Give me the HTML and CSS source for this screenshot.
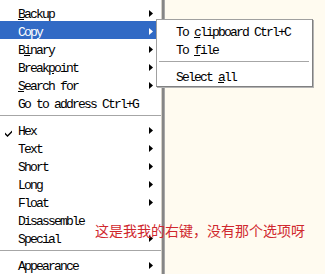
FILE: index.html
```html
<!DOCTYPE html>
<html lang="en">
<head>
    <meta charset="UTF-8">
    <title>Context menu</title>
    <link rel="stylesheet" href="styles.css">
</head>
<body>
    <div class="menu">
        <div class="item"><span><u>B</u>ackup</span><svg class="arrow" width="4" height="7"><polygon points="0,0 4,3.5 0,7"/></svg></div>
        <div class="item active"><span>Copy</span><svg class="arrow" width="4" height="7"><polygon points="0,0 4,3.5 0,7"/></svg></div>
        <div class="item"><span>B<u>i</u>nary</span><svg class="arrow" width="4" height="7"><polygon points="0,0 4,3.5 0,7"/></svg></div>
        <div class="item"><span>Break<u>p</u>oint</span><svg class="arrow" width="4" height="7"><polygon points="0,0 4,3.5 0,7"/></svg></div>
        <div class="item"><span><u>S</u>earch for</span><svg class="arrow" width="4" height="7"><polygon points="0,0 4,3.5 0,7"/></svg></div>
        <div class="item"><span>Go to address Ctrl+G</span></div>
        <div class="sep"></div>
        <div class="item checked">
            <svg class="check" width="7" height="7"><polygon points="0,2.5 2.5,5 7,0.5 7,2.5 2.5,7 0,4.5"/></svg>
            <span>Hex</span><svg class="arrow" width="4" height="7"><polygon points="0,0 4,3.5 0,7"/></svg>
        </div>
        <div class="item"><span>Text</span><svg class="arrow" width="4" height="7"><polygon points="0,0 4,3.5 0,7"/></svg></div>
        <div class="item"><span>Short</span><svg class="arrow" width="4" height="7"><polygon points="0,0 4,3.5 0,7"/></svg></div>
        <div class="item"><span>Long</span><svg class="arrow" width="4" height="7"><polygon points="0,0 4,3.5 0,7"/></svg></div>
        <div class="item"><span>Float</span><svg class="arrow" width="4" height="7"><polygon points="0,0 4,3.5 0,7"/></svg></div>
        <div class="item"><span>Disassemble</span></div>
        <div class="item"><span>Special</span><svg class="arrow" width="4" height="7"><polygon points="0,0 4,3.5 0,7"/></svg></div>
        <div class="sep"></div>
        <div class="item"><span>Appearance</span><svg class="arrow" width="4" height="7"><polygon points="0,0 4,3.5 0,7"/></svg></div>
    </div>

    <!-- Copy submenu -->
    <div class="submenu">
        <div class="item"><span>To <u>c</u>lipboard Ctrl+C</span></div>
        <div class="item"><span>To <u>f</u>ile</span></div>
        <div class="sep"></div>
        <div class="item"><span>Select <u>a</u>ll</span></div>
    </div>

    <div class="note">这是我我的右键，没有那个选项呀</div>
</body>
</html>
```

FILE: styles.css
```css
* {
    margin: 0;
    padding: 0;
    box-sizing: border-box;
}

body {
    position: relative;
    height: 100vh;
    overflow: hidden;
    background: #fffbf0;
    font-family: "Liberation Mono", "DejaVu Sans Mono", monospace;
    font-size: 13px;
    color: #000;
}

.menu {
    width: 162px;
    height: 100vh;
    padding-top: 3px;
    background: #fff;
    border-right: 1px solid #d4d0c8;
    box-shadow: 2px 0 0 #868686, 3px 0 0 #a8a8a8;
}

.item {
    display: flex;
    align-items: flex-start;
    height: 18px;
    padding: 5px 8px 0 18px;
    line-height: 13px;
    letter-spacing: -1.8px;
    white-space: nowrap;
}

.item u {
    text-decoration: underline;
    text-underline-offset: 1px;
}

.item .arrow {
    margin-left: auto;
    margin-top: 2px;
    fill: #000;
}

.item.active {
    background: #316ac5;
    color: #fff;
}

.item.active .arrow {
    fill: #fff;
}

.item.checked {
    padding-left: 5px;
}

.check {
    margin: 5px 6px 0 0;
    fill: #000;
}

.sep {
    height: 9px;
    padding-top: 4px;
}

.sep::before {
    content: "";
    display: block;
    height: 1px;
    background: #a6a6a6;
}

.submenu {
    position: absolute;
    left: 156px;
    top: 19px;
    width: 157px;
    height: 68px;
    padding: 1px 0 2px;
    background: #fff;
    border: 1px solid #a0a0a0;
    border-right-color: #808080;
    border-bottom-color: #808080;
    box-shadow: 1px 1px 0 #b4b4b4;
}

.submenu .item {
    padding-left: 19px;
}

.submenu .sep {
    padding: 4px 3px 0 2px;
}

.note {
    position: absolute;
    left: 95px;
    top: 223px;
    font-family: "Noto Sans CJK SC", sans-serif;
    font-size: 14px;
    line-height: 14px;
    color: #d0282e;
    white-space: nowrap;
}
```
